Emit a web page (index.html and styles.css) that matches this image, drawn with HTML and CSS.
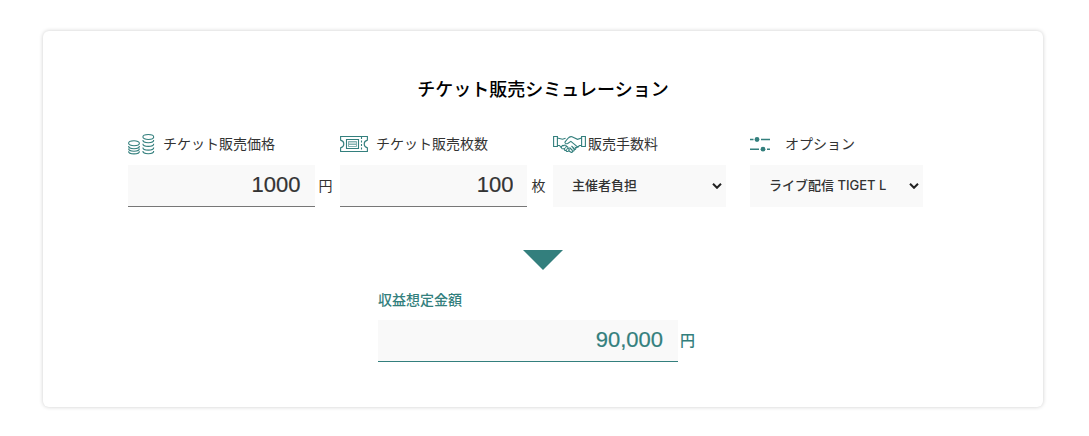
FILE: index.html
```
<!DOCTYPE html>
<html lang="ja">
<head>
<meta charset="utf-8">
<meta name="viewport" content="width=device-width, initial-scale=1">
<title>チケット販売シミュレーション</title>
<link rel="stylesheet" href="styles.css">
</head>
<body>
<main class="card">
  <h1 class="title">チケット販売シミュレーション</h1>
  <form class="simulation">
    <div class="fields">
      <div class="field">
        <label class="label" for="price">
          <svg class="icon" width="27" height="22" viewBox="0 0 27 22" aria-hidden="true">
            <ellipse cx="6" cy="10.2" rx="5.400" ry="2.500"/>
            <path d="M.6 13c0 3.600 10.800 3.600 10.800 0M.6 15.600c0 3.600 10.800 3.600 10.800 0M.6 18.200c0 3.600 10.800 3.600 10.800 0"/>
            <ellipse cx="20.300" cy="4" rx="5.400" ry="2.500"/>
            <path d="M14.900 7c0 3.600 10.800 3.600 10.800 0M14.900 10.700c0 3.600 10.800 3.600 10.800 0M14.900 14.400c0 3.600 10.800 3.600 10.800 0M14.900 18c0 3.600 10.800 3.600 10.800 0"/>
          </svg>
          <span>チケット販売価格</span>
        </label>
        <div class="control">
          <input class="number" id="price" type="text" inputmode="numeric" value="1000">
          <span class="unit">円</span>
        </div>
      </div>
      <div class="field">
        <label class="label" for="count">
          <svg class="icon" width="28" height="20" viewBox="0 0 28 20" aria-hidden="true">
            <path d="M.6 2.500h26.800v3.600c-4.300 1.200-4.300 6.600 0 7.800v3.600H.6v-3.600c4.300-1.200 4.300-6.600 0-7.800z"/>
            <path d="M6.500 5.500h12v9h-12z"/>
            <path class="fine" d="M8.500 7.500h8v5h-8zM9 9h7M9 10.500h7"/>
            <path class="dashed" d="M21.500 3v14"/>
          </svg>
          <span>チケット販売枚数</span>
        </label>
        <div class="control">
          <input class="number" id="count" type="text" inputmode="numeric" value="100">
          <span class="unit">枚</span>
        </div>
      </div>
      <div class="field">
        <label class="label label-tight" for="fee">
          <svg class="icon" width="33" height="20" viewBox="0 0 33 20" aria-hidden="true">
            <path d="M.6 2.500h3.800v10H.6zM28.600 2.500h3.800v10h-3.800z"/>
            <path d="M4.400 4l5.100 1.300 3.100-1M4.400 11.500h2l2.400 2.700M28.600 4l-4.100 1.300-5.500-2.500c-1.700-.6-3 .3-4.200 1.700l-2.700 3.400c-.7 1.100 1 2.400 2.600 1.600l3.200-2.100 6.600 5.500M28.600 11.500h-2.200l-1.900 2"/>
            <path d="M8.800 14.200c-1.500-.7.600-3.500 2-2.500 1.100-1.400 3.200-.4 2.300 1.100 1.500-.7 2.700.7 1.500 1.900 1.600-.3 2.200 1.200 1 2.100-1.300 1.200-2.700.8-2.300-.6-1.500.6-2.500-.4-1.700-1.700-1.600.7-2.900-.1-2.800-.3M15.600 16.800l2.400 1.400c1 .6 2-.5 1.200-1.400 1.300.8 2.700-.4 1.800-1.600 1.300.5 2.500-.5 1.600-1.700 1.200.3 2.200-.5 1.900-1.200M16.500 13.500l3 3M18.500 12l3 3"/>
          </svg>
          <span>販売手数料</span>
        </label>
        <select class="choice" id="fee"><option>主催者負担</option></select>
        <svg class="chevron" width="10" height="6" viewBox="0 0 10 6" aria-hidden="true"><path d="M1 .8l4 4 4-4"/></svg>
      </div>
      <div class="field">
        <label class="label label-wide" for="option">
          <svg class="icon" width="20" height="20" viewBox="0 0 20 20" aria-hidden="true">
            <path class="rail" d="M0 5.500h3.500M11 5.500h9M0 15.200h9M17 15.200h3"/>
            <circle class="knob" cx="7" cy="5.500" r="2.400"/>
            <circle class="knob" cx="13" cy="15.200" r="2.400"/>
          </svg>
          <span>オプション</span>
        </label>
        <select class="choice" id="option"><option>ライブ配信 TIGET L</option></select>
        <svg class="chevron" width="10" height="6" viewBox="0 0 10 6" aria-hidden="true"><path d="M1 .8l4 4 4-4"/></svg>
      </div>
    </div>
    <svg class="arrow" width="40" height="20" viewBox="0 0 40 20" aria-hidden="true"><path d="M0 0h40L20 20z"/></svg>
    <div class="result">
      <label class="result-label" for="revenue">収益想定金額</label>
      <div class="control">
        <input class="number number-result" id="revenue" type="text" value="90,000" readonly>
        <span class="unit unit-result">円</span>
      </div>
    </div>
  </form>
</main>
</body>
</html>
```
FILE: styles.css
```
* {
  box-sizing: border-box;
}

body {
  margin: 0;
  padding: 31px 46px 28px 43px;
  background: #fff;
  color: #333;
  font-family: "Liberation Sans", "Noto Sans CJK JP", sans-serif;
  font-size: 14px;
  line-height: 20px;
}

.card {
  max-width: 1000px;
  margin: 0 auto;
  padding: 45px 85px;
  border-radius: 6px;
  background: #fff;
  box-shadow: 0 0 4px rgba(0, 0, 0, 0.2);
}

.title {
  margin: 0 0 30px;
  color: #000;
  font-size: 18px;
  font-weight: 500;
  line-height: 28px;
  text-align: center;
}

.simulation {
  display: flex;
  flex-direction: column;
  align-items: center;
}

.fields {
  display: grid;
  grid-template-columns: 212fr 213fr 197fr 208fr;
  width: 100%;
}

.field {
  position: relative;
}

.label {
  display: flex;
  align-items: center;
  gap: 8px;
  height: 20px;
  margin-bottom: 11px;
}

.label-tight {
  gap: 2px;
}

.label-wide {
  gap: 15px;
}

.icon {
  flex: none;
  fill: none;
  stroke: #337f7d;
  stroke-width: 1.1;
}

.icon .fine {
  stroke-width: 0.6;
}

.icon .dashed {
  stroke-dasharray: 2 1.5;
}

.icon .rail {
  stroke-width: 1.6;
}

.icon .knob {
  fill: #337f7d;
  stroke: none;
}

.control {
  display: flex;
  align-items: center;
  gap: 4px;
}

.number {
  width: 88%;
  height: 42px;
  padding: 0 14px 2px;
  border: 0;
  border-bottom: 1px solid #777;
  border-radius: 0;
  background: #f9f9f9;
  color: #333;
  font: 22px "Liberation Sans", "Noto Sans CJK JP", sans-serif;
  text-align: right;
  -webkit-text-stroke: 0.2px currentColor;
}

.choice {
  display: block;
  width: 173px;
  max-width: 100%;
  height: 42px;
  padding: 0 30px 2px 19px;
  appearance: none;
  border: 0;
  border-radius: 0;
  background: #f9f9f9;
  color: #333;
  font: 500 13px Inter, "Noto Sans CJK JP", sans-serif;
}

.chevron {
  position: absolute;
  top: 49px;
  left: 159px;
  fill: none;
  stroke: #222;
  stroke-width: 2;
  pointer-events: none;
}

.arrow {
  margin: 43px 0 20px;
  fill: #337f7d;
}

.result {
  width: 330px;
  max-width: 100%;
  color: #337f7d;
}

.result-label {
  display: block;
  margin-bottom: 10px;
  font-weight: 500;
}

.result .control {
  gap: 2px;
}

.number-result {
  width: 300px;
  padding-right: 15px;
  border-color: #337f7d;
  color: #337f7d;
}

.unit-result {
  font-size: 15px;
  font-weight: 500;
}
```
